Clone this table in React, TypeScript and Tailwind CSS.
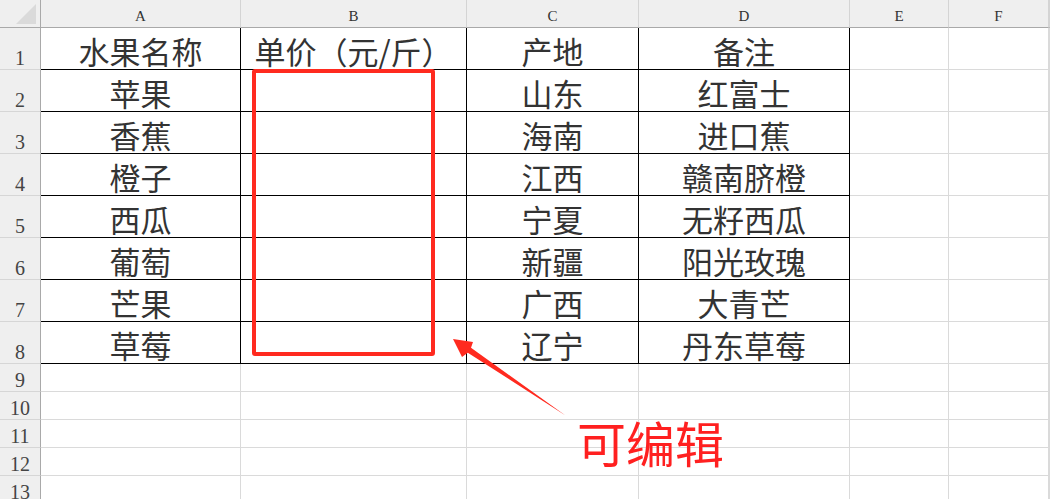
import React from 'react';

const colW = ['w-[200px]', 'w-[226px]', 'w-[172px]', 'w-[211px]', 'w-[99px]', 'w-[100px]', 'flex-1'];
const colLabels = ['A', 'B', 'C', 'D', 'E', 'F', ''];

const data: string[][] = [
  ['水果名称', '单价（元/斤）', '产地', '备注'],
  ['苹果', '', '山东', '红富士'],
  ['香蕉', '', '海南', '进口蕉'],
  ['橙子', '', '江西', '赣南脐橙'],
  ['西瓜', '', '宁夏', '无籽西瓜'],
  ['葡萄', '', '新疆', '阳光玫瑰'],
  ['芒果', '', '广西', '大青芒'],
  ['草莓', '', '辽宁', '丹东草莓'],
];

const serif = { fontFamily: '"Liberation Serif", "DejaVu Serif", serif' };
const cjk = { fontFamily: '"Noto Sans CJK SC", "Noto Sans", sans-serif' };

function RowHeader({ n, tall }: { n: number; tall: boolean }) {
  return (
    <div
      className={`w-[41px] shrink-0 ${tall ? 'h-[42px]' : 'h-[28px]'} bg-[#efefef] border-r border-r-[#a9a9a9] border-b border-b-[#d6d6d6] flex items-end justify-center pb-[1px] text-[20px] leading-none text-[#444]`}
      style={serif}
    >
      {n}
    </div>
  );
}

export default function App() {
  const emptyRows = [9, 10, 11, 12, 13];

  return (
    <div className="relative w-[1050px] h-[499px] overflow-hidden bg-white">
      {/* Column headers */}
      <div className="flex h-[28px]">
        <div className="relative w-[41px] shrink-0 bg-[#efefef] border-r border-r-[#a9a9a9] border-b border-b-[#a9a9a9]">
          <svg className="absolute left-0 top-0" width="40" height="27">
            <polygon points="36,4 36,24 16,24" fill="#dadada" />
          </svg>
        </div>
        {colLabels.map((l, i) => (
          <div
            key={i}
            className={`${colW[i]} shrink-0 bg-[#efefef] border-r border-r-[#d4d4d4] border-b border-b-[#a9a9a9] flex items-end justify-center pb-[3px] text-[15px] leading-none text-[#333]`}
            style={serif}
          >
            {l}
          </div>
        ))}
      </div>

      {/* Data rows */}
      {data.map((row, r) => (
        <div key={r} className="flex h-[42px]">
          <RowHeader n={r + 1} tall />
          {colLabels.map((_, c) => {
            const inTable = c < 4;
            const text = inTable ? row[c] : '';
            return (
              <div
                key={c}
                className={`${colW[c]} shrink-0 border-r border-b ${inTable ? 'border-black' : 'border-[#dadada]'} ${c === 4 ? 'border-b-[#dadada]' : ''} flex items-center justify-center pt-[3px] whitespace-nowrap text-[31px] leading-none text-[#333]`}
                style={cjk}
              >
                {text}
              </div>
            );
          })}
        </div>
      ))}

      {emptyRows.map((n) => (
        <div key={n} className="flex h-[28px]">
          <RowHeader n={n} tall={false} />
          {colLabels.map((_, c) => (
            <div key={c} className={`${colW[c]} shrink-0 border-r border-b border-[#dadada]`} />
          ))}
        </div>
      ))}

      {/* Annotation */}
      <div className="absolute left-[252px] top-[69px] w-[183px] h-[287px] border-4 border-[#ff2a1f] rounded-[3px]" />
      <svg className="absolute left-0 top-0" width="1050" height="499">
        <polygon points="453,339 473,342 471,347.7 565.5,415.5 467.8,352.7 462,357" fill="#ff2a1f" />
      </svg>
      <div className="absolute left-[577px] top-[417px] text-[49px] leading-none text-[#ff2020] whitespace-nowrap" style={cjk}>
        可编辑
      </div>
    </div>
  );
}
